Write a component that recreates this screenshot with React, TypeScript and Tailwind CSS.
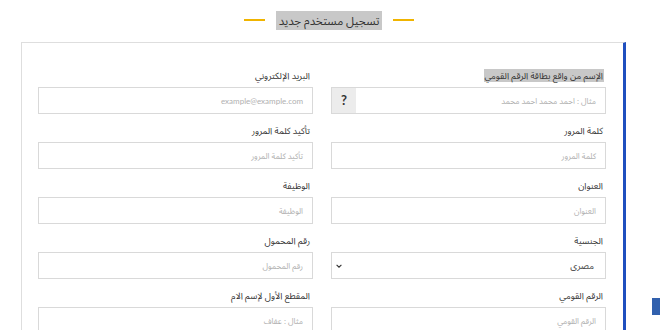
import * as React from 'react';

const font = { fontFamily: 'Lato, "Noto Sans Arabic", "DejaVu Sans", sans-serif' };

type Field = { label: string; placeholder: string; kind?: 'help' | 'select'; mark?: boolean };

const fields: Field[] = [
  { label: 'الإسم من واقع بطاقة الرقم القومي', placeholder: 'مثال : احمد محمد احمد محمد', kind: 'help', mark: true },
  { label: 'البريد الإلكتروني', placeholder: 'example@example.com' },
  { label: 'كلمة المرور', placeholder: 'كلمة المرور' },
  { label: 'تأكيد كلمة المرور', placeholder: 'تأكيد كلمة المرور' },
  { label: 'العنوان', placeholder: 'العنوان' },
  { label: 'الوظيفة', placeholder: 'الوظيفة' },
  { label: 'الجنسية', placeholder: 'مصرى', kind: 'select' },
  { label: 'رقم المحمول', placeholder: 'رقم المحمول' },
  { label: 'الرقم القومي', placeholder: 'الرقم القومي' },
  { label: 'المقطع الأول لإسم الام', placeholder: 'مثال : عفاف' },
];

function FormField({ label, placeholder, kind, mark }: Field) {
  return (
    <div className="flex flex-col">
      <div className="h-[16px] flex items-center mb-[4px] pr-[2px]">
        <span className={`text-[9px] text-[#333] leading-[13px] px-px ${mark ? 'bg-[#c8c8c8]' : ''}`}>{label}</span>
      </div>
      <div className="h-[27px] border border-[#d9d9d9] bg-white flex items-center">
        {kind === 'select' ? (
          <>
            <span className="flex-1 pr-[11px] text-[9px] text-[#444]">{placeholder}</span>
            <svg width="8" height="8" viewBox="0 0 10 10" className="ml-[3px]">
              <path d="M2 3.5 L5 6.5 L8 3.5" fill="none" stroke="#333" strokeWidth="1.4" />
            </svg>
          </>
        ) : (
          <>
            <span className="flex-1 pr-[9px] text-[8px] text-[#b0b0b0]">{placeholder}</span>
            {kind === 'help' && (
              <div className="w-[24px] h-full bg-[#ececec] flex items-center justify-center text-[13px] font-bold text-[#333]">?</div>
            )}
          </>
        )}
      </div>
    </div>
  );
}

export default function App() {
  return (
    <div dir="rtl" style={font} className="relative w-[660px] h-[330px] bg-white overflow-hidden">
      <div className="h-[42px] flex items-center justify-center gap-[11px] pb-[2px] pr-[2px]">
        <div className="w-[21px] h-[2px] bg-[#f0b400]" />
        <span className="text-[11.5px] leading-[19px] text-[#333] bg-[#c8c8c8] px-[3px]">تسجيل مستخدم جديد</span>
        <div className="w-[21px] h-[2px] bg-[#f0b400]" />
      </div>
      <div className="mr-[34px] ml-[21px] border-t border-l border-[#dedede] border-r-[3px] border-r-[#1f4fbf] h-[288px] pt-[24px] pr-[17px] pl-[16px]">
        <div className="grid grid-cols-2 gap-x-[18px] gap-y-[8px]">
          {fields.map((f) => (
            <FormField key={f.label} {...f} />
          ))}
        </div>
      </div>
      <div className="absolute left-[652px] top-[298px] w-[10px] h-[17px] bg-[#3160ad]" />
    </div>
  );
}
